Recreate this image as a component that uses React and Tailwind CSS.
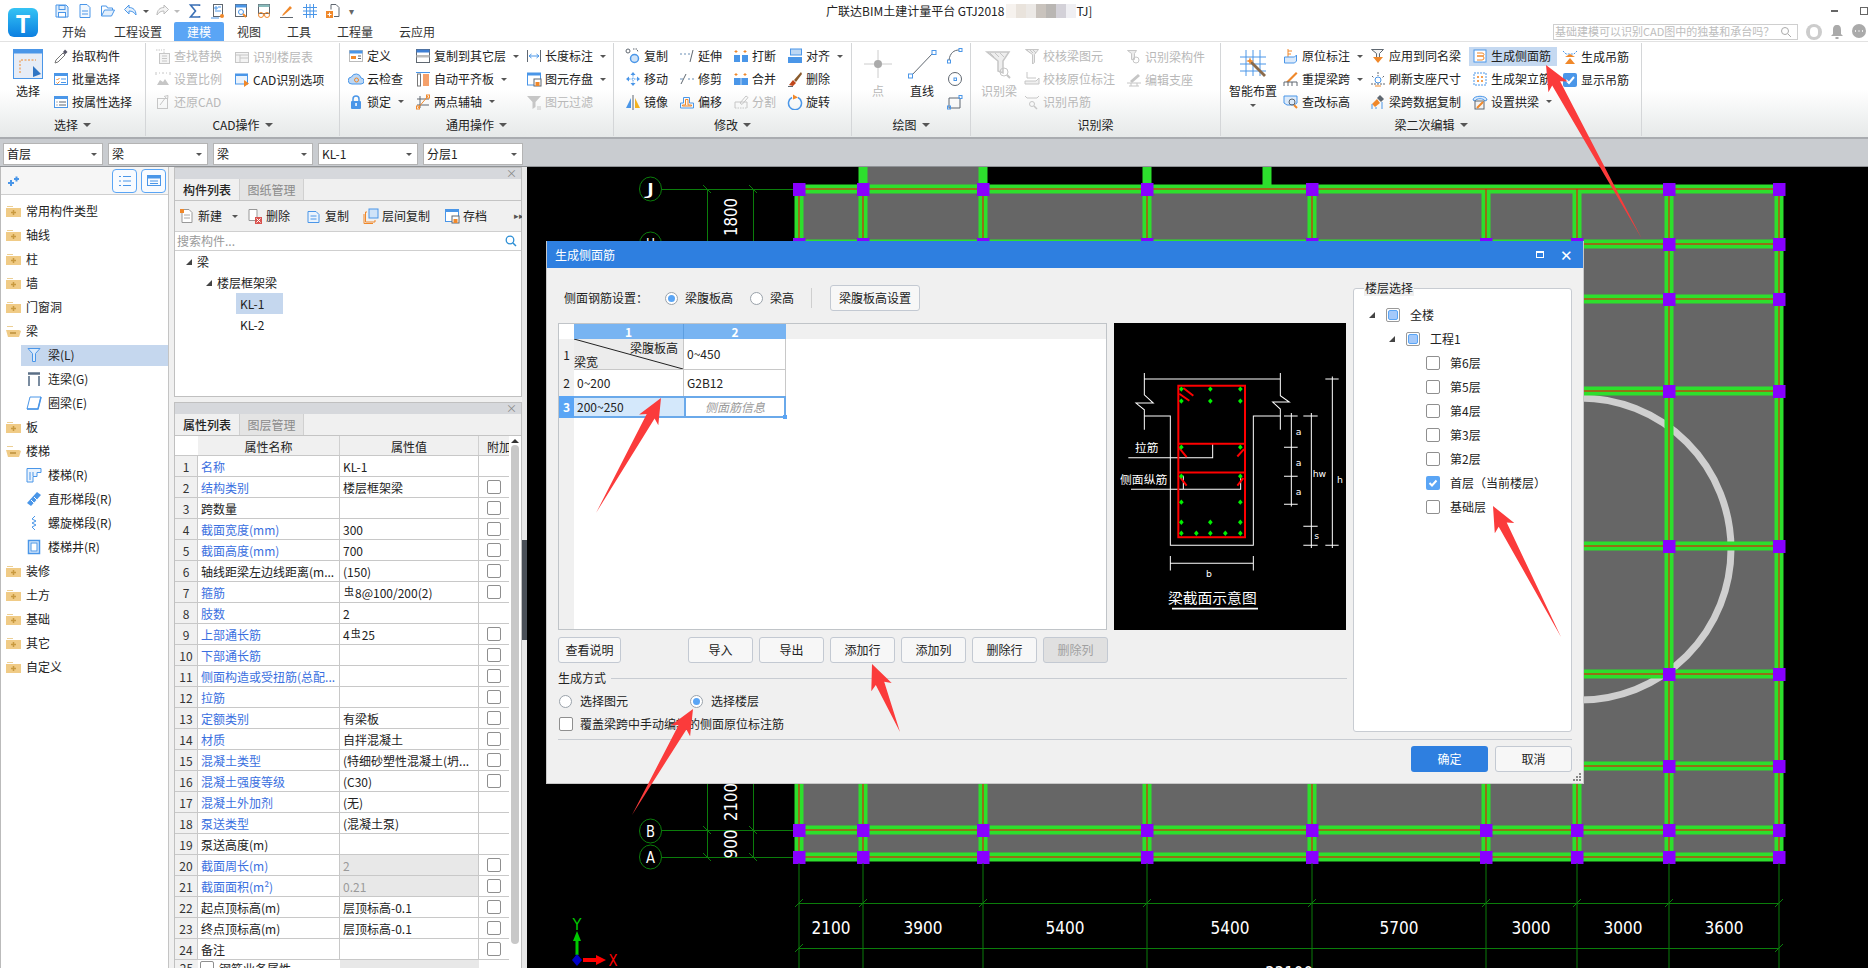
import React from 'react';

const B = '#4a96e8';
const O = '#f0882a';
const D = '#c6c6c6';
const DK = '#5f6770';

const Svg = ({ w = 16, h = 16, children }) => (
  <svg width={w} height={h} viewBox={`0 0 ${w} ${h}`} fill="none" className="shrink-0">{children}</svg>
);

const Icons = {
  save: <Svg><path d="M2 2h10l2 2v10H2z" stroke={B} fill="#e4f0fc" /><rect x="5" y="2.500" width="6" height="4" stroke={B} /><rect x="4.500" y="9.500" width="7" height="4.500" stroke={B} fill="#fff" /></Svg>,
  newdoc: <Svg><path d="M3 1.500h7l3 3v10H3z" stroke={B} fill="#f2f8fe" /><path d="M5 8h6M5 11h6" stroke={B} /></Svg>,
  open: <Svg><path d="M1.500 13V3h5l1 2h5v2" stroke={B} /><path d="M1.500 13l3-6h10l-3 6z" stroke={B} fill="#e4f0fc" /></Svg>,
  undo: <Svg><path d="M6 2L1.500 6.500 6 11V8c3 0 5 1 7 4 0-5-3-7.500-7-7.500z" stroke={B} fill="#e4f0fc" /></Svg>,
  redo: <Svg><path d="M10 2l4.500 4.500L10 11V8c-3 0-5 1-7 4 0-5 3-7.500 7-7.500z" stroke="#bbb" fill="#f4f4f4" /></Svg>,
  sigma: <Svg><path d="M12.500 3V2h-9l5 6-5 6h9v-1" stroke="#3a6fb5" strokeWidth="1.600" /></Svg>,
  calc: <Svg><rect x="3.500" y="1.500" width="9" height="12" stroke={DK} fill="#fff" /><path d="M5 4h2v2H5zM8 4h3M5 8h6" stroke={B} /><path d="M1 15h8" stroke={B} /><circle cx="12" cy="13" r="2" fill={O} /></Svg>,
  docfind: <Svg><rect x="2.500" y="1.500" width="11" height="12" stroke={DK} fill="#fff" /><path d="M2.500 1.500h11v3h-11z" fill={B} /><circle cx="8" cy="9" r="2.500" stroke={B} /><path d="M10 11l3 3" stroke={O} strokeWidth="2" /></Svg>,
  glasses: <Svg><rect x="2.500" y="1.500" width="11" height="9" stroke={DK} fill="#fff" /><path d="M2.500 1.500h11v2.500h-11z" fill="#8bb" /><circle cx="5" cy="12" r="2.500" stroke={O} /><circle cx="11" cy="12" r="2.500" stroke={O} /><path d="M7.500 12h1" stroke={O} /></Svg>,
  pen: <Svg><path d="M4 11l7-8 2 2-8 7-2 1z" fill={O} /><path d="M1 14.500h13" stroke={DK} /></Svg>,
  grid: <Svg><path d="M1 4.500h14M1 8h14M1 11.500h14M4.500 1v14M8 1v14M11.500 1v14" stroke={B} /></Svg>,
  plusdoc: <Svg><path d="M6 1.500h5l3 3v9H9" stroke={DK} /><path d="M6 1.500v5" stroke={DK} /><rect x="1" y="8" width="7" height="7" fill={O} /><path d="M4.500 9.500v4M2.500 11.500h4" stroke="#fff" /></Svg>,

  pick: <Svg><path d="M2 15l1-3 7-7 2 2-7 7z" fill="#fff" stroke="#777" /><path d="M10 4l2-2.500L14.500 4 12 6.500z" fill="#556" /></Svg>,
  batch: <Svg><rect x="1.500" y="2.500" width="13" height="11" stroke={B} fill="#fff" /><rect x="1.500" y="2.500" width="13" height="2.500" fill={B} /><path d="M3.500 8l1 1 2-2M3.500 11.500l1 1 2-2" stroke={O} /><path d="M8 8h5M8 11.500h5" stroke={B} /></Svg>,
  attr: <Svg><rect x="1.500" y="2.500" width="13" height="11" stroke={B} fill="#fff" /><rect x="1.500" y="2.500" width="13" height="2.500" fill={B} /><path d="M3.500 8h1M3.500 11h1M6 8h7M6 11h7" stroke={DK} /></Svg>,
  find: <Svg><path d="M1 2h6M9 1v4" stroke={D} strokeDasharray="1.500 1" /><rect x="4.500" y="5.500" width="10" height="10" stroke={D} fill="#f4f4f4" /><path d="M7 8h5M7 10.500h5M7 13h5" stroke={D} /></Svg>,
  table: <Svg><rect x="1.500" y="3.500" width="13" height="10" stroke={D} fill="#f4f4f4" /><path d="M1.500 6h13M6 6v7.500M6 9h8" stroke={D} /></Svg>,
  scale: <Svg><path d="M1 1v3M15 1v3M4 2h1M7 2h2M11 2h1" stroke={D} /><path d="M2 14l3-5 3 2 2-3 4 6z" fill={D} /></Svg>,
  cadopt: <Svg><rect x="1.500" y="2" width="12" height="10" stroke={B} fill="#eaf3fd" /><rect x="1.500" y="2" width="12" height="2" fill={B} /><path d="M10 8l5 3.500-5 3.500z" fill={O} /></Svg>,
  restore: <Svg><rect x="2.500" y="4.500" width="10" height="10" stroke={D} /><path d="M5 11l6-8M9 2.500l4-1-.500 4" stroke={D} /></Svg>,
  define: <Svg><rect x="1.500" y="2.500" width="13" height="11" stroke="#bbb" fill="#fff" /><rect x="1.500" y="2.500" width="13" height="3" fill={B} /><rect x="3" y="8" width="5" height="3" fill={O} /><path d="M10 8h3M10 10.500h3" stroke={DK} /></Svg>,
  cloud: <Svg><path d="M4 13a3.500 3.500 0 0 1-.500-7 5 5 0 0 1 9.500 1 3 3 0 0 1 0 6z" fill="#bcd7f4" stroke={B} /><circle cx="8.500" cy="9" r="2" stroke={O} /></Svg>,
  lock: <Svg><path d="M5 7V5a3 3 0 0 1 6 0v2" stroke={B} strokeWidth="1.500" /><rect x="3" y="7" width="10" height="8" rx="1" fill={B} /><rect x="7.300" y="9" width="1.500" height="3" fill="#fff" /></Svg>,
  copyto: <Svg><rect x="1.500" y="1.500" width="13" height="13" stroke={DK} fill="#fff" /><rect x="1.500" y="1.500" width="13" height="3" fill="#3f7fd4" /><rect x="1.500" y="7" width="13" height="2.500" fill="#bbb" /></Svg>,
  align: <Svg><path d="M1 1.500h14" stroke={B} /><rect x="2.500" y="3" width="3" height="12" stroke="#777" fill="#fff" /><rect x="8" y="3" width="6" height="12" fill="#f5a06a" /></Svg>,
  twoaxis: <Svg><path d="M2 5h12M2 11h12M5 2v12" stroke={DK} /><path d="M3 14L13 2" stroke={O} /><rect x="11.500" y="1" width="3" height="3" stroke={O} /><rect x="1.500" y="12" width="3" height="3" stroke={O} /></Svg>,
  dim: <Svg><path d="M1.500 2v12M14.500 2v12" stroke={DK} /><path d="M3 8h10M3 8l2.500-2M3 8l2.500 2M13 8l-2.500-2M13 8l-2.500 2" stroke={B} /></Svg>,
  saveel: <Svg><rect x="1.500" y="2" width="13" height="12" stroke={B} fill="#fff" /><rect x="1.500" y="2" width="13" height="2.500" fill={B} /><rect x="8" y="8" width="7" height="7" fill="#fff" stroke={DK} /><rect x="9.500" y="11" width="4" height="4" fill={O} /></Svg>,
  filter: <Svg><path d="M1 2h14L9.500 8v5L6.500 15V8z" fill={D} /><path d="M11 13h4M11 15h4" stroke={D} /></Svg>,
  copy: <Svg><circle cx="3" cy="3" r="2" stroke={DK} /><path d="M8 1h4l1 3" stroke={DK} strokeDasharray="1.500 1" /><circle cx="9.500" cy="10.500" r="4" fill="#cfe3f8" stroke={B} strokeWidth="1.500" /></Svg>,
  extend: <Svg><path d="M1 6h2M5 6h2M9 6h2" stroke="#6a8fb5" /><path d="M11 14l3-12" stroke={DK} /></Svg>,
  cut: <Svg><path d="M2 13L7 3" stroke={DK} /><path d="M1 8h3M9 8h2M13 8h2" stroke="#6a8fb5" /></Svg>,
  breakk: <Svg><path d="M3 2v3M1.500 3.500h3M12 2v3M10.500 3.500h3" stroke={O} /><rect x="1" y="7" width="6" height="7" fill={B} /><rect x="9" y="7" width="6" height="7" fill={B} /></Svg>,
  merge: <Svg><path d="M3 2v3M1.500 3.500h3M12 2v3M10.500 3.500h3" stroke={O} /><rect x="1" y="7" width="14" height="7" fill={B} /><path d="M8 7v7" stroke="#bcd7f4" /></Svg>,
  alignr: <Svg><rect x="3.500" y="1" width="11" height="6" fill="#bcd7f4" stroke={B} /><rect x="1" y="9" width="14" height="6" fill={B} /></Svg>,
  move: <Svg><path d="M8 1l2.500 3h-5zM8 15l2.500-3h-5zM1 8l3-2.500v5zM15 8l-3-2.500v5z" fill={B} /><path d="M4 8h8M8 4v8" stroke={B} strokeDasharray="1.500 1" /></Svg>,
  erase: <Svg><path d="M14 1L7 9l2 2 6-8z" fill="#8a5a2b" /><path d="M6 9l3 3-3 3-4-1z" fill="#c0461b" /><path d="M1 15.500h5" stroke={DK} /></Svg>,
  mirror: <Svg><path d="M1 14l5-10v10z" fill={B} /><path d="M8 1v15" stroke={DK} /><path d="M10 4l5 10h-5z" fill="#f5b21e" /></Svg>,
  offset: <Svg><path d="M1.500 14V9h3V3.500h6V9h4v5z" stroke={B} /><path d="M3.500 12V11h3V5.500h2.500V11h3.500v1z" stroke={O} /></Svg>,
  split: <Svg><path d="M2 14V8h12v6" stroke={D} /><path d="M2 14h12" stroke={D} strokeDasharray="1.500 1" /><path d="M7 9l6-7 2 1.500-6 7z" stroke={D} /></Svg>,
  rotate: <Svg><path d="M5 3.500A6.500 6.500 0 1 0 11 3.500" stroke={B} strokeWidth="1.500" /><path d="M6 0.500l5 3-5 2z" fill={O} /></Svg>,
  arc: <Svg><rect x="0.500" y="12" width="3" height="3" stroke={B} /><path d="M2 12C3 5 7 2 12 2" stroke={DK} /><rect x="12" y="0.500" width="3" height="3" stroke={B} /></Svg>,
  circle: <Svg><circle cx="8" cy="8" r="6.500" stroke={DK} /><rect x="7" y="7" width="2.500" height="2.500" stroke={B} /></Svg>,
  rectt: <Svg><path d="M2 4h11v10H2" stroke={DK} /><path d="M2 4v10" stroke={DK} /><rect x="12" y="1.500" width="3" height="3" stroke={B} /><rect x="0.500" y="12" width="3" height="3" stroke={B} /></Svg>,
  chkbeam: <Svg><path d="M1.500 1.500h13l-4 5v8l-2 1.500v-9.500z" stroke={D} fill="#ececec" /><path d="M3 2l3 3M6 2l3 3M9 2l3 3" stroke={D} /></Svg>,
  chkorig: <Svg><path d="M3 1v6h9" stroke={D} /><path d="M1 10h11l3-3v6H1z" stroke={D} fill="#f0f0f0" /></Svg>,
  hang: <Svg><path d="M1 2l2 2h10l2-2" stroke={D} /><circle cx="8" cy="10" r="2.500" stroke={D} /><path d="M10 12l3 3" stroke={D} strokeWidth="1.500" /></Svg>,
  beampart: <Svg><path d="M1.500 1.500h9l-2 3v6h-3v-6z" stroke={D} fill="#ececec" /><circle cx="10" cy="11" r="3" stroke={D} /></Svg>,
  support: <Svg><path d="M1 11h14M3 14h10M5 11v3M11 11v3" stroke={D} /><path d="M4 9l8-7 2 2-8 7z" fill={D} /></Svg>,
  orig: <Svg><path d="M5 1v8M5 3h4M5 6h3" stroke={O} /><path d="M1.500 9h10l2-2v6l-2 2h-10z" fill="#dbeafb" stroke={B} /></Svg>,
  respan: <Svg><path d="M3 11L13 1l1.500 1.500L6 11z" fill={O} /><path d="M1 15V11h13v4M5 11v4M9 11v4" stroke={DK} /></Svg>,
  elev: <Svg><path d="M1 2h13v7l-3 2H4l-3-2z" fill="#dbeafb" stroke={B} /><circle cx="9" cy="8" r="3" stroke={DK} /><path d="M11 11l3 3" stroke={O} strokeWidth="2" /></Svg>,
  apply: <Svg><path d="M1.500 1.500h12l-4 4v6h-3v-6z" stroke={DK} fill="#f4f4f4" /><path d="M3 9l5 6 5-6z" fill={O} /></Svg>,
  refresh: <Svg><circle cx="8" cy="9" r="3" stroke={B} /><path d="M8 1v4M2 5l2 2M14 5l-2 2M1 13h14" stroke={DK} strokeDasharray="2 1" /><path d="M5 15h6" stroke={O} /></Svg>,
  brush: <Svg><path d="M10 1l4 4-3 3-4-4z" fill={DK} /><path d="M7 5l3 4-5 4-3-3z" fill={O} /><path d="M2 10v5M6 13v2M12 8v7" stroke={B} /></Svg>,
  sidebar: <Svg><rect x="2" y="2" width="12" height="12" stroke={B} fill="#fff" /><path d="M5 5h5q2 0 2 1.500T10 8H5M5 8h5q2 0 2 2t-2 2H5" stroke={O} /></Svg>,
  frame: <Svg><rect x="2" y="2" width="12" height="12" stroke={B} strokeDasharray="2 1" /><path d="M5.500 5.500h1v1h-1zM9.500 5.500h1v1h-1zM5.500 9.500h1v1h-1zM9.500 9.500h1v1h-1z" fill={O} stroke={O} /></Svg>,
  arch: <Svg><path d="M1 6c0-5 14-5 14 0l-2 1c-1-3-9-3-10 0z" fill="#dbeafb" stroke={B} /><rect x="3" y="7" width="9" height="8" fill="#f4f4f4" stroke={DK} /><path d="M5 14l6-6" stroke={O} strokeWidth="2" /></Svg>,
  genhang: <Svg><path d="M1 2l3 3h8l3-3" stroke={B} strokeDasharray="2 1" /><path d="M3 8l5-3 5 3z" fill={O} /><path d="M3 15h10l-5-6z" fill={O} /></Svg>,
  showhang: <Svg><rect x="1" y="1" width="14" height="14" rx="2" fill={B} /><path d="M4 8l3 3 5-6" stroke="#fff" strokeWidth="2" /></Svg>,
};

const caret = <span className="ml-[7px] inline-block w-0 h-0 border-x-[3px] border-x-transparent border-t-[3px] border-t-[#555]" />;

const Item = ({ icon, label, off, drop, active }) => (
  <div className={`flex items-center h-[23px] whitespace-nowrap ${off ? 'text-[#b8b8b8]' : 'text-[#222]'}`}>
    <div className={`flex items-center h-[19px] ${active ? 'bg-[#c5d9f1] -ml-[3px] pl-[3px] w-[88px]' : ''}`}>
      <span className="w-[19px] shrink-0">{Icons[icon]}</span>
      <span>{label}</span>
      {drop && caret}
    </div>
  </div>
);

const Col = ({ className, items }) => (
  <div className={`flex flex-col shrink-0 ${className}`}>
    {items.map((it) => <Item key={it.label} {...it} />)}
  </div>
);

const Big = ({ className, icon, label, off, drop }) => (
  <div className={`flex flex-col items-center shrink-0 pt-[4px] ${className} ${off ? 'text-[#b8b8b8]' : 'text-[#222]'}`}>
    <div className="h-[30px] flex items-center">{icon}</div>
    <span className="mt-[4px] leading-4 whitespace-nowrap">{label}</span>
    {drop && <span className="mt-[5px] w-0 h-0 border-x-[3px] border-x-transparent border-t-[3px] border-t-[#555]" />}
  </div>
);

const Group = ({ className, label, drop, children }) => (
  <div className={`flex flex-col shrink-0 border-r border-[#d4d6d8] my-[1px] ${className}`}>
    <div className="flex h-[70px] pt-[2px]">{children}</div>
    <div className="flex-1 flex items-center justify-center text-[#222]">
      <span>{label}</span>
      {drop && <span className="ml-[5px] w-0 h-0 border-x-[4px] border-x-transparent border-t-[4px] border-t-[#555]" />}
    </div>
  </div>
);

const Ribbon = () => (
  <div className="flex h-[98px] border-t border-[#e2e2e2] border-b-2 border-b-[#a9acb0] bg-gradient-to-b from-white via-white to-[#e6e9e9]">
    <Group className="w-[146px]" label="选择" drop>
      <Big className="w-[48px] ml-[4px]" label="选择" icon={
        <Svg w={30} h={30}>
          <rect x="0.500" y="0.500" width="29" height="29" fill="#e6ecf6" stroke={B} />
          <rect x="0.500" y="0.500" width="29" height="4" fill={B} />
          <path d="M7 24V11h16" stroke={O} strokeDasharray="2 1.500" />
          <path d="M20 17l8 8-8 3z" fill="#2f75c4" />
        </Svg>
      } />
      <Col className="ml-[1px]" items={[{ icon: 'pick', label: '抬取构件' }, { icon: 'batch', label: '批量选择' }, { icon: 'attr', label: '按属性选择' }]} />
    </Group>
    <Group className="w-[194px]" label="CAD操作" drop>
      <Col className="ml-[9px] w-[79px]" items={[{ icon: 'find', label: '查找替换', off: true }, { icon: 'scale', label: '设置比例', off: true }, { icon: 'restore', label: '还原CAD', off: true }]} />
      <Col items={[{ icon: 'table', label: '识别楼层表', off: true }, { icon: 'cadopt', label: 'CAD识别选项' }]} />
    </Group>
    <Group className="w-[274px]" label="通用操作" drop>
      <Col className="ml-[8px] w-[67px]" items={[{ icon: 'define', label: '定义' }, { icon: 'cloud', label: '云检查' }, { icon: 'lock', label: '锁定', drop: true }]} />
      <Col className="w-[111px]" items={[{ icon: 'copyto', label: '复制到其它层', drop: true }, { icon: 'align', label: '自动平齐板', drop: true }, { icon: 'twoaxis', label: '两点辅轴', drop: true }]} />
      <Col items={[{ icon: 'dim', label: '长度标注', drop: true }, { icon: 'saveel', label: '图元存盘', drop: true }, { icon: 'filter', label: '图元过滤', off: true }]} />
    </Group>
    <Group className="w-[238px]" label="修改" drop>
      <Col className="ml-[11px] w-[54px]" items={[{ icon: 'copy', label: '复制' }, { icon: 'move', label: '移动' }, { icon: 'mirror', label: '镜像' }]} />
      <Col className="w-[54px]" items={[{ icon: 'extend', label: '延伸' }, { icon: 'cut', label: '修剪' }, { icon: 'offset', label: '偏移' }]} />
      <Col className="w-[54px]" items={[{ icon: 'breakk', label: '打断' }, { icon: 'merge', label: '合并' }, { icon: 'split', label: '分割', off: true }]} />
      <Col items={[{ icon: 'alignr', label: '对齐', drop: true }, { icon: 'erase', label: '删除' }, { icon: 'rotate', label: '旋转' }]} />
    </Group>
    <Group className="w-[119px]" label="绘图" drop>
      <Big className="w-[44px] ml-[4px]" label="点" off icon={
        <Svg w={30} h={30}>
          <path d="M15 1v28M1 15h28" stroke="#ccc" />
          <circle cx="15" cy="15" r="4" fill="#aaa" />
        </Svg>
      } />
      <Big className="w-[44px]" label="直线" icon={
        <Svg w={30} h={30}>
          <path d="M4 27L26 4" stroke={DK} />
          <rect x="1.500" y="25" width="4" height="4" stroke={B} fill="#fff" />
          <rect x="25" y="1.500" width="4" height="4" stroke={B} fill="#fff" />
        </Svg>
      } />
      <div className="flex flex-col ml-[3px]">
        <div className="h-[23px] flex items-center">{Icons.arc}</div>
        <div className="h-[23px] flex items-center">{Icons.circle}</div>
        <div className="h-[23px] flex items-center">{Icons.rectt}</div>
      </div>
    </Group>
    <Group className="w-[250px]" label="识别梁">
      <Big className="w-[50px] ml-[3px]" label="识别梁" off icon={
        <Svg w={30} h={30}>
          <path d="M3 3h22l-6 9v12l-5-2V12z" fill="#eee" stroke={D} strokeWidth="1.500" />
          <path d="M6 4l4 4M11 4l4 4M16 4l4 4" stroke={D} />
          <circle cx="20" cy="23" r="4" stroke={D} />
          <path d="M23 26l3 3" stroke={D} strokeWidth="2" />
        </Svg>
      } />
      <Col className="w-[102px]" items={[{ icon: 'chkbeam', label: '校核梁图元', off: true }, { icon: 'chkorig', label: '校核原位标注', off: true }, { icon: 'hang', label: '识别吊筋', off: true }]} />
      <Col items={[{ icon: 'beampart', label: '识别梁构件', off: true }, { icon: 'support', label: '编辑支座', off: true }]} />
    </Group>
    <Group className="w-[421px]" label="梁二次编辑" drop>
      <Big className="w-[56px] ml-[4px]" label="智能布置" drop icon={
        <Svg w={30} h={30}>
          <path d="M2 8h26M2 15h26M2 22h26M8 1v26M15 1v26M22 1v26" stroke={B} />
          <path d="M14 12l14 14-2 2L12 14z" fill="#8a6a4a" />
          <path d="M12 8l1 3 3 1-3 1-1 3-1-3-3-1 3-1z" fill={O} />
        </Svg>
      } />
      <Col className="ml-[2px] w-[87px]" items={[{ icon: 'orig', label: '原位标注', drop: true }, { icon: 'respan', label: '重提梁跨', drop: true }, { icon: 'elev', label: '查改标高' }]} />
      <Col className="w-[102px]" items={[{ icon: 'apply', label: '应用到同名梁' }, { icon: 'refresh', label: '刷新支座尺寸' }, { icon: 'brush', label: '梁跨数据复制' }]} />
      <Col className="w-[90px]" items={[{ icon: 'sidebar', label: '生成侧面筋', active: true }, { icon: 'frame', label: '生成架立筋' }, { icon: 'arch', label: '设置拱梁', drop: true }]} />
      <Col items={[{ icon: 'genhang', label: '生成吊筋' }, { icon: 'showhang', label: '显示吊筋' }]} />
    </Group>
  </div>
);

const Header = () => (
  <div className="flex h-[41px]">
    <div className="w-[46px] h-[41px] shrink-0 pl-[8px] pt-[8px]">
      <div className="w-[30px] h-[29px] rounded-[6px] bg-gradient-to-b from-[#35c3f4] to-[#0d7fe0] flex items-center justify-center text-white font-bold text-[24px] leading-none">T</div>
    </div>
    <div className="flex-1 flex flex-col">
      <div className="flex items-center h-[22px] pl-[4px]">
        {['save', 'newdoc', 'open', 'undo'].map((k) => <span key={k} className="w-[23px] flex justify-center">{Icons[k]}</span>)}
        <span className="w-[8px] flex justify-center"><span className="w-0 h-0 border-x-[3px] border-x-transparent border-t-[3px] border-t-[#555]" /></span>
        <span className="w-[23px] flex justify-center">{Icons.redo}</span>
        <span className="w-[8px] flex justify-center mr-[2px]"><span className="w-0 h-0 border-x-[3px] border-x-transparent border-t-[3px] border-t-[#bbb]" /></span>
        {['sigma', 'calc', 'docfind', 'glasses', 'pen', 'grid', 'plusdoc'].map((k) => <span key={k} className="w-[23px] flex justify-center">{Icons[k]}</span>)}
        <span className="w-[14px] flex justify-center text-[#666] text-[10px]">▾</span>
        <div className="ml-[468px] flex items-center text-[#222] whitespace-nowrap">
          <span>广联达BIM土建计量平台 GTJ2018</span>
          <div className="flex ml-[2px] h-[14px]">
            <span className="w-[10px] bg-[#f6f2ee]" />
            <span className="w-[10px] bg-[#e9e3dc]" />
            <span className="w-[10px] bg-[#ece9e6]" />
            <span className="w-[10px] bg-[#c9c3bd]" />
            <span className="w-[10px] bg-[#b9b6b3]" />
            <span className="w-[10px] bg-[#d3d1d8]" />
            <span className="w-[10px] bg-[#efeff3]" />
          </div>
          <span>TJ]</span>
        </div>
        <div className="ml-auto flex items-center">
          <span className="w-[7px] h-[2px] bg-[#666]" />
          <span className="ml-[22px] w-[8px] h-[8px] border border-[#666]" />
        </div>
      </div>
      <div className="flex h-[19px]">
        {[['开始', 'w-[56px]'], ['工程设置', 'w-[72px]'], ['建模', 'w-[50px]'], ['视图', 'w-[50px]'], ['工具', 'w-[50px]'], ['工程量', 'w-[62px]'], ['云应用', 'w-[62px]']].map(([t, w]) => (
          <div key={t} className={`${w} flex items-center justify-center rounded-t-[2px] ${t === '建模' ? 'bg-[#5aa5f5] text-white' : 'text-[#333]'}`}>{t}</div>
        ))}
        <div className="ml-auto flex items-center pr-[1px]">
          <div className="w-[245px] h-[16px] border border-[#cfcfcf] flex items-center pl-[1px] pr-[5px] text-[11px] text-[#bdbdbd] overflow-hidden whitespace-nowrap">
            <span className="flex-1">基础建模可以识别CAD图中的独基和承台吗？</span>
            <Svg w={12} h={12}><circle cx="5" cy="5" r="3.500" stroke="#aaa" /><path d="M8 8l3 3" stroke="#aaa" /></Svg>
          </div>
          <div className="ml-[8px] w-[16px] h-[16px] rounded-full bg-[#ccc] flex items-center justify-center"><span className="w-[8px] h-[10px] rounded-full bg-white" /></div>
          <div className="ml-[7px]">
            <Svg><path d="M8 1c3 0 4 2 4 5v4l2 2H2l2-2V6c0-3 1-5 4-5z" fill="#aaa" /><rect x="6.500" y="13" width="3" height="2" fill="#aaa" /></Svg>
          </div>
          <div className="ml-[6px]">
            <Svg><circle cx="8" cy="7" r="7" fill="#aaa" /><path d="M4 7h1M7.500 7h1M11 7h1" stroke="#fff" strokeWidth="1.500" /></Svg>
          </div>
        </div>
      </div>
    </div>
  </div>
);

const Combo = ({ label }) => (
  <div className="w-[100px] h-[22px] bg-white border border-[#b4b4b4] flex items-center justify-between px-[3px] text-[#222]">
    <span>{label}</span>
    <span className="mr-[2px] w-0 h-0 border-x-[3px] border-x-transparent border-t-[3px] border-t-[#555]" />
  </div>
);

const Folder = ({ open }) => (
  <Svg w={15} h={13}>
    <path d="M1 1h6v1H1z" fill="#eccf94" />
    <path d={open ? 'M0 5h13l2 1-2 6H2z' : 'M0 3h15v9H0z'} fill="#f0cb86" />
    {open
      ? <path d="M4 8h6" stroke="#bd8f3a" strokeWidth="1.500" />
      : <path d="M5 7.500h5M7.500 5v5" stroke="#c8993f" strokeWidth="1.500" />}
  </Svg>
);

const TreeIcons = {
  beam: <Svg><path d="M2 1.500h12l-4.500 5v8h-3v-8z" stroke={B} fill="#dbeafb" /></Svg>,
  lintel: <Svg><path d="M2 2.500h12" stroke="#5b6f86" strokeWidth="2.500" /><path d="M3 5v10M13 5v10" stroke="#7a8ca0" strokeWidth="2" /></Svg>,
  ring: <Svg><path d="M4 2h11l-3 12H1z" stroke={B} fill="#fff" /><path d="M1 14h11l3-12" stroke={B} strokeWidth="1.500" /></Svg>,
  stair: <Svg><path d="M1 1.500h14v4h-4v4H7v5.500H1z" stroke={B} fill="#eaf3fd" /><path d="M4 5v8M7 5v4" stroke={B} /></Svg>,
  straight: <Svg><path d="M1 12L11 1l4 3L5 15z" fill={B} /><path d="M5 9l3 3M8 6l3 3" stroke="#fff" /></Svg>,
  spiral: <Svg><path d="M9 1L6 4l4 2-4 2 4 2-4 2 3 3" stroke={B} /></Svg>,
  well: <Svg><rect x="2.500" y="1.500" width="11" height="13" stroke={B} fill="#dbeafb" strokeWidth="1.500" /><rect x="5" y="4" width="6" height="8" stroke={B} fill="#fff" /></Svg>,
};

const leftTree = [
  ['常用构件类型'], ['轴线'], ['柱'], ['墙'], ['门窗洞'], ['梁', 'open'],
  ['梁(L)', 'beam', true], ['连梁(G)', 'lintel'], ['圈梁(E)', 'ring'],
  ['板'], ['楼梯', 'open'],
  ['楼梯(R)', 'stair'], ['直形梯段(R)', 'straight'], ['螺旋梯段(R)', 'spiral'], ['楼梯井(R)', 'well'],
  ['装修'], ['土方'], ['基础'], ['其它'], ['自定义'],
];

const LeftPanel = () => (
  <div className="w-[169px] shrink-0 flex flex-col bg-white border-l border-[#bbb] border-r border-r-[#c4c4c4]">
    <div className="h-[28px] shrink-0 flex items-center bg-[#f6f6f6] border-b border-[#cfcfcf] pl-[7px]">
      <Svg w={12} h={12}><path d="M0 8h6M3 5v6M6 4h5M8.500 1.500v5" stroke={B} strokeWidth="2" /></Svg>
      <div className="ml-[92px] w-[25px] h-[24px] rounded-[4px] border border-[#5aa5f5] bg-[#f8fbff] flex items-center justify-center">
        <Svg w={14} h={14}><path d="M1 2.500h2M1 7h2M1 11.500h2M5 2.500h8M5 7h8M5 11.500h8" stroke={B} /></Svg>
      </div>
      <div className="ml-[4px] w-[25px] h-[24px] rounded-[4px] border border-[#5aa5f5] bg-[#f8fbff] flex items-center justify-center">
        <Svg w={14} h={14}><rect x="0.500" y="1.500" width="13" height="10" stroke={B} /><rect x="0.500" y="1.500" width="13" height="3" fill={B} /><path d="M3 7h8M3 9.500h8" stroke={B} /></Svg>
      </div>
    </div>
    <div className="flex flex-col pt-[4px] text-[#222]">
      {leftTree.map(([label, kind, sel]) => {
        const child = kind && kind !== 'open';
        if (child) {
          return (
            <div key={label} className="h-[24px] flex items-center pl-[20px]">
              <div className={`flex-1 h-[21px] flex items-center pl-[5px] ${sel ? 'bg-[#c5d7ee]' : ''}`}>
                {TreeIcons[kind]}
                <span className="ml-[6px]">{label}</span>
              </div>
            </div>
          );
        }
        return (
          <div key={label} className="h-[24px] flex items-center pl-[5px]">
            <Folder open={kind === 'open'} />
            <span className="ml-[5px]">{label}</span>
          </div>
        );
      })}
    </div>
  </div>
);

const PanelHead = ({ a, b }) => (
  <>
    <div className="h-[11px] shrink-0 bg-[#d6d8dc] flex items-center justify-end pr-[4px] text-[#888] text-[11px] leading-none">×</div>
    <div className="h-[22px] shrink-0 flex bg-[#f0f0f0] border-b border-[#c4c4c4]">
      <div className="w-[64px] flex items-center justify-center font-medium text-[#222]">{a}</div>
      <div className="w-[65px] flex items-center justify-center bg-[#e4e4e4] text-[#8a8a8a] border-x border-[#d0d0d0]">{b}</div>
    </div>
  </>
);

const ToolBtn = ({ className, icon, label, drop }) => (
  <div className={`flex items-center shrink-0 ${className}`}>
    {icon}
    <span className="ml-[3px]">{label}</span>
    {drop && <span className="ml-[10px] w-0 h-0 border-x-[3px] border-x-transparent border-t-[3px] border-t-[#555]" />}
  </div>
);

const Tri = () => (
  <Svg w={6} h={6}><path d="M6 0v6H0z" fill="#444" /></Svg>
);

const CompPanel = () => (
  <div className="h-[230px] shrink-0 flex flex-col border border-[#c0c0c0] bg-white text-[#222]">
    <PanelHead a="构件列表" b="图纸管理" />
    <div className="h-[30px] shrink-0 flex items-center pl-[4px] bg-[#f0f0f0] whitespace-nowrap">
      <ToolBtn className="w-[68px]" label="新建" drop icon={<Svg><path d="M3 1.500h7l3 3v10H3z" stroke="#999" fill="#fff" /><path d="M5 7h6M5 10h6" stroke="#aaa" /><path d="M1 1h4v4H1z" fill={O} /></Svg>} />
      <ToolBtn className="w-[59px]" label="删除" icon={<Svg><path d="M2 1.500h8v11H2z" stroke="#999" fill="#fff" /><rect x="8" y="9" width="7" height="7" fill="#d9534f" /><path d="M9.500 10.500l4 4M13.500 10.500l-4 4" stroke="#fff" /></Svg>} />
      <ToolBtn className="w-[57px]" label="复制" icon={<Svg><path d="M2 3.500h8l3 3v8H2z" stroke={B} fill="#eaf3fd" /><path d="M4.500 8h6M4.500 11h6" stroke={B} /></Svg>} />
      <ToolBtn className="w-[81px]" label="层间复制" icon={<Svg><rect x="6" y="1" width="9" height="9" fill="#cfe3f8" stroke={B} /><path d="M4 4H2.500v10H12v-2M1 6v9.500h9" stroke={O} /></Svg>} />
      <ToolBtn className="w-[70px]" label="存档" icon={<Svg><rect x="1.500" y="1.500" width="13" height="12" stroke={B} fill="#fff" /><rect x="1.500" y="1.500" width="13" height="2.500" fill={B} /><rect x="8" y="8" width="7" height="7" fill="#fff" stroke={DK} /><rect x="9.500" y="11" width="4" height="4" fill={O} /></Svg>} />
      <span className="text-[#555] text-[9px]">▸▸</span>
    </div>
    <div className="h-[20px] shrink-0 flex items-center justify-between px-[2px] pr-[4px] border-y border-[#cfcfcf] text-[#9a9a9a]">
      <span>搜索构件...</span>
      <Svg w={12} h={12}><circle cx="5" cy="5" r="3.800" stroke="#2d8fd5" strokeWidth="1.300" /><path d="M8 8l3 3" stroke="#2d8fd5" strokeWidth="1.500" /></Svg>
    </div>
    <div className="flex flex-col">
      <div className="h-[21px] flex items-center pl-[11px]"><Tri /><span className="ml-[5px]">梁</span></div>
      <div className="h-[21px] flex items-center pl-[31px]"><Tri /><span className="ml-[5px]">楼层框架梁</span></div>
      <div className="h-[21px] flex items-center pl-[61px]"><div className="w-[47px] h-full flex items-center pl-[4px] bg-[#c5d7ee]">KL-1</div></div>
      <div className="h-[21px] flex items-center pl-[65px]">KL-2</div>
    </div>
  </div>
);

const Steel = () => <span className="text-[10px] [vertical-align:3px] mx-[1px]">虫</span>;

const props = [
  ['名称', 'KL-1', 0, 1],
  ['结构类别', '楼层框架梁', 1, 1],
  ['跨数量', '', 1, 0],
  ['截面宽度(mm)', '300', 1, 1],
  ['截面高度(mm)', '700', 1, 1],
  ['轴线距梁左边线距离(m...', '(150)', 1, 0],
  ['箍筋', <span><Steel />8@100/200(2)</span>, 1, 1],
  ['肢数', '2', 0, 1],
  ['上部通长筋', <span>4<Steel />25</span>, 1, 1],
  ['下部通长筋', '', 1, 1],
  ['侧面构造或受扭筋(总配...', '', 1, 1],
  ['拉筋', '', 1, 1],
  ['定额类别', '有梁板', 1, 1],
  ['材质', '自拌混凝土', 1, 1],
  ['混凝土类型', '(特细砂塑性混凝土(坍...', 1, 1],
  ['混凝土强度等级', '(C30)', 1, 1],
  ['混凝土外加剂', '(无)', 0, 1],
  ['泵送类型', '(混凝土泵)', 0, 1],
  ['泵送高度(m)', '', 0, 0],
  ['截面周长(m)', '2', 1, 1, 1],
  ['截面面积(m²)', '0.21', 1, 1, 1],
  ['起点顶标高(m)', '层顶标高-0.1', 1, 0],
  ['终点顶标高(m)', '层顶标高-0.1', 1, 0],
  ['备注', '', 1, 0],
];

const Box = () => <span className="w-[14px] h-[14px] rounded-[2px] border border-[#8f8f8f] bg-white shrink-0" />;

const PropPanel = () => (
  <div className="flex-1 min-h-0 flex flex-col border border-[#c0c0c0] border-b-0 bg-white text-[#222] overflow-hidden mt-[5px]">
    <PanelHead a="属性列表" b="图层管理" />
    <div className="flex-1 min-h-0 flex overflow-hidden">
      <div className="w-[334px] shrink-0 flex flex-col">
        <div className="h-[20px] shrink-0 flex border-b border-[#c8c8c8]">
          <div className="w-[23px] bg-white" />
          <div className="w-[142px] flex items-center justify-center pt-[2px] bg-[#f0f0f0] border-r border-[#d0d0d0]">属性名称</div>
          <div className="w-[139px] flex items-center justify-center pt-[2px] bg-[#f0f0f0] border-r border-[#d0d0d0]">属性值</div>
          <div className="w-[30px] pl-[8px] pt-[2px] flex items-center bg-[#f0f0f0] overflow-hidden whitespace-nowrap">附加</div>
        </div>
        {props.map(([name, value, box, blue, grey], i) => (
          <div key={i} className="h-[21px] shrink-0 flex items-center border-b border-[#c8c8c8] whitespace-nowrap">
            <div className="w-[23px] h-full flex items-center justify-center pt-[1px] bg-[#f0f0f0] border-r border-[#c8c8c8] text-[#333]">{i + 1}</div>
            <div className={`w-[142px] h-full flex items-center pl-[3px] pt-[1px] border-r border-[#c8c8c8] overflow-hidden ${blue ? 'text-[#3a6fe0]' : ''}`}>{name}</div>
            <div className={`w-[139px] h-full flex items-center pl-[3px] pt-[1px] border-r border-[#c8c8c8] overflow-hidden ${grey ? 'bg-[#e8e8e8] text-[#9a9a9a]' : ''}`}>{value}</div>
            <div className="w-[30px] h-full flex items-center justify-center">{box ? <Box /> : null}</div>
          </div>
        ))}
        <div className="h-[21px] shrink-0 flex">
          <div className="w-[23px] bg-[#f0f0f0] flex justify-center text-[#333]">25</div>
          <div className="w-[142px] flex pl-[2px] pt-[1px] whitespace-nowrap"><Box /><span className="ml-[5px]">钢筋业务属性</span></div>
          <div className="w-[139px] bg-[#e8e8e8]" />
        </div>
      </div>
      <div className="flex-1 flex flex-col items-center pt-[3px]">
        <span className="w-0 h-0 border-x-[4px] border-x-transparent border-b-[4px] border-b-[#333]" />
        <div className="mt-[2px] w-[8px] h-[499px] rounded-[4px] bg-[#c8c8c8]" />
      </div>
    </div>
  </div>
);

const cols = [799, 863, 983, 1147, 1312, 1486, 1577, 1669, 1779];
const rows = [189, 244, 299, 391, 546, 674, 766, 830, 857];
const topCols = [799, 863, 983, 1147, 1312, 1669, 1779];
const axisGreen = '#0b7d0b';
const beamGreen = '#2ddf2d';

const dims = [[831, '2100'], [923, '3900'], [1065, '5400'], [1230, '5400'], [1399, '5700'], [1531, '3000'], [1623, '3000'], [1724, '3600']];

const Canvas = () => (
  <svg viewBox="527 167 1341 801" width="1341" height="801" className="block">
    <rect x="527" y="167" width="1341" height="801" fill="#000" />
    <rect x="799" y="189" width="980" height="668" fill="#666" />
    <rect x="863" y="167" width="120" height="22" fill="#666" />
    <circle cx="1580" cy="549" r="151" fill="none" stroke="#cfcfcf" strokeWidth="7" />
    {[863, 983, 1147, 1267].map((x) => <rect key={x} x={x - 4.5} y="167" width="9" height="18" fill={beamGreen} />)}
    {cols.map((x) => <rect key={x} x={x - 4.5} y="189" width="9" height="668" fill={beamGreen} />)}
    {rows.map((y) => <rect key={y} x="799" y={y - 4.5} width="980" height="9" fill={beamGreen} />)}
    {cols.map((x) => <rect key={x} x={x - 0.5} y="189" width="1" height="668" fill="#ff0000" />)}
    {rows.map((y) => <rect key={y} x="799" y={y - 0.5} width="980" height="1" fill="#ff0000" />)}
    {rows.map((y) => (y === 189 ? topCols : cols).map((x) => (
      <rect key={`${x}-${y}`} x={x - 6} y={y - 6} width="12.500" height="13" fill="#8800ff" />
    )))}

    {cols.map((x) => <path key={x} d={`M${x} 863V968`} stroke={axisGreen} />)}
    <path d="M799 903.500H1779M799 948.500H1779" stroke={axisGreen} />
    {cols.map((x) => <path key={x} d={`M${x - 4} 907L${x + 4} 899`} stroke={axisGreen} />)}
    <path d="M795 952L803 944M1775 952L1783 944" stroke={axisGreen} />
    {dims.map(([x, t], i) => (
      <text key={i} x={x} y="934" fill="#fff" fontFamily="DejaVu Sans, sans-serif" fontSize="18" textAnchor="middle" textLength="39" lengthAdjust="spacingAndGlyphs">{t}</text>
    ))}
    <text x="1289" y="979" fill="#fff" fontFamily="DejaVu Sans, sans-serif" fontSize="18" textAnchor="middle" textLength="48" lengthAdjust="spacingAndGlyphs">33100</text>

    <path d="M662 189.500H793M661 830.500H793M661 857.500H793M707.500 189V857M753.500 189V857" stroke={axisGreen} />
    <path d="M703 185L711 193M749 185L757 193M703 826L711 834M749 826L757 834M703 853L711 861M749 853L757 861" stroke={axisGreen} />
    {[['J', 189], ['H', 244], ['B', 831], ['A', 857]].map(([t, y]) => (
      <g key={t}>
        <ellipse cx="650.500" cy={y} rx="11" ry="12" fill="#000" stroke={axisGreen} />
        <text x="650.500" y={y + 6} fill="#fff" fontFamily="DejaVu Sans, sans-serif" fontSize="16" textAnchor="middle" textLength="9" lengthAdjust="spacingAndGlyphs">{t}</text>
      </g>
    ))}
    <text transform="rotate(-90 737 217)" x="737" y="217" fill="#fff" fontFamily="DejaVu Sans, sans-serif" fontSize="18" textAnchor="middle" textLength="38" lengthAdjust="spacingAndGlyphs">1800</text>
    <text transform="rotate(-90 737 802)" x="737" y="802" fill="#fff" fontFamily="DejaVu Sans, sans-serif" fontSize="18" textAnchor="middle" textLength="38" lengthAdjust="spacingAndGlyphs">2100</text>
    <text transform="rotate(-90 737 844)" x="737" y="844" fill="#fff" fontFamily="DejaVu Sans, sans-serif" fontSize="18" textAnchor="middle" textLength="29" lengthAdjust="spacingAndGlyphs">900</text>

    <path d="M577 955V940" stroke="#00c800" strokeWidth="3" />
    <path d="M577 931l4 10h-8z" fill="#00c800" />
    <path d="M583 960h14" stroke="#f00" strokeWidth="4" />
    <path d="M606 960l-10-5v10z" fill="#f00" />
    <path d="M577 954l5 6-5 6-5-6z" fill="#0000c8" />
    <text x="577" y="930" fill="#00c800" fontFamily="DejaVu Sans, sans-serif" fontSize="15" textAnchor="middle" textLength="9" lengthAdjust="spacingAndGlyphs">Y</text>
    <text x="613" y="966" fill="#f00" fontFamily="DejaVu Sans, sans-serif" fontSize="15" textAnchor="middle" textLength="9" lengthAdjust="spacingAndGlyphs">X</text>
  </svg>
);

const Radio = ({ on }) => (
  <span className="w-[13px] h-[13px] rounded-full border border-[#9aa2aa] bg-white flex items-center justify-center shrink-0">
    {on && <span className="w-[7px] h-[7px] rounded-full bg-[#5aa5f5]" />}
  </span>
);

const Btn = ({ className, off, children }) => (
  <div className={`h-[26px] flex items-center justify-center rounded-[3px] border border-[#c3c9d2] ${off ? 'bg-[#e0e0e0] text-[#a0a0a0]' : 'bg-[#f7f7f7] text-[#222]'} ${className}`}>{children}</div>
);

const rebarDots = [[244, 208], [331, 208], [421, 208], [244, 244], [331, 244], [421, 244], [244, 382], [421, 382], [244, 469], [421, 469], [244, 547], [421, 547], [244, 607], [331, 607], [421, 607], [244, 640], [289, 640], [331, 640], [376, 640], [421, 640]];

const Section = () => (
  <svg viewBox="42 10 696 920" preserveAspectRatio="none" width="232" height="307" className="block shrink-0 bg-black">
    <g stroke="#fff" strokeWidth="3" fill="none">
      <path d="M133 160V225L160 250H108L133 270V330M133 178H541M541 160V228L568 247H518L541 268V330" />
      <path d="M133 289H211V676H460V289H541" />
      <path d="M552 289H593M552 382H593M552 469H593M552 553H593M574 280V560" />
      <path d="M610 289H653M610 619H653M610 676H653M634 280V684" />
      <path d="M676 178H716M676 676H716M697 170V684" />
      <path d="M211 708V752M460 708V752M211 730H460" />
      <path d="M85 414H338V372M93 508H422V470M250 508V468" />
    </g>
    <path d="M216 866H474" stroke="#fff" strokeWidth="5" />
    <g stroke="#f00" strokeWidth="6" fill="none">
      <rect x="235" y="198" width="200" height="454" />
      <path d="M235 372H435M235 458H435" />
      <path d="M250 205L280 228M238 222L268 243M238 385L260 412M432 388L412 410M240 472L260 497M430 475L412 497" />
    </g>
    {rebarDots.map(([x, y]) => <path key={`${x}-${y}`} d={`M${x} ${y - 8}l7 8-7 8-7-8z`} fill="#00f000" />)}
    <g fill="#fff" fontFamily="Noto Sans CJK SC, sans-serif">
      <text x="105" y="398" fontSize="34" textLength="70" lengthAdjust="spacingAndGlyphs">拉筋</text>
      <text x="60" y="492" fontSize="34" textLength="142" lengthAdjust="spacingAndGlyphs">侧面纵筋</text>
      <text x="204" y="848" fontSize="42" textLength="266" lengthAdjust="spacingAndGlyphs">梁截面示意图</text>
      <text x="587" y="345" fontSize="28" fontFamily="DejaVu Sans, sans-serif">a</text>
      <text x="587" y="438" fontSize="28" fontFamily="DejaVu Sans, sans-serif">a</text>
      <text x="587" y="525" fontSize="28" fontFamily="DejaVu Sans, sans-serif">a</text>
      <text x="638" y="473" fontSize="28" fontFamily="DejaVu Sans, sans-serif">hw</text>
      <text x="643" y="658" fontSize="28" fontFamily="DejaVu Sans, sans-serif">s</text>
      <text x="711" y="488" fontSize="28" fontFamily="DejaVu Sans, sans-serif">h</text>
      <text x="318" y="770" fontSize="28" fontFamily="DejaVu Sans, sans-serif">b</text>
    </g>
  </svg>
);

const GridTable = () => (
  <div className="w-[549px] h-[307px] shrink-0 flex flex-col border border-[#c0c4c8] bg-white text-[#222]">
    <div className="h-[15px] shrink-0 flex bg-[#f0f0f0] font-bold text-white leading-none">
      <div className="w-[15px] bg-white" />
      <div className="w-[110px] flex items-center justify-center bg-[#78b4f2] border-r border-[#5d9ee0]">1</div>
      <div className="w-[102px] flex items-center justify-center bg-[#78b4f2]">2</div>
    </div>
    <div className="h-[31px] shrink-0 flex">
      <div className="w-[15px] flex items-center justify-center bg-[#f0f0f0]">1</div>
      <div className="w-[110px] relative bg-[#ececec] border-r border-b border-[#c8c8c8]">
        <svg width="109" height="30" className="absolute inset-0"><path d="M0 0L109 30" stroke="#222" /></svg>
        <span className="absolute right-[5px] top-[1px]">梁腹板高</span>
        <span className="absolute left-0 -bottom-[1px]">梁宽</span>
      </div>
      <div className="w-[102px] flex items-center pl-[3px] border-r border-b border-[#c8c8c8]">0~450</div>
    </div>
    <div className="h-[26px] shrink-0 flex">
      <div className="w-[15px] flex items-center justify-center bg-[#f0f0f0]">2</div>
      <div className="w-[110px] flex items-center pl-[3px] border-r border-[#c8c8c8]">0~200</div>
      <div className="w-[102px] flex items-center pl-[3px] border-r border-[#c8c8c8]">G2B12</div>
    </div>
    <div className="h-[22px] shrink-0 flex">
      <div className="w-[15px] flex items-center justify-center bg-[#5aa5f5] text-white font-bold">3</div>
      <div className="w-[110px] flex items-center pl-[3px] bg-[#d4e8fb] border-y-2 border-[#6aa9ea]">200~250</div>
      <div className="w-[102px] relative flex items-center justify-center italic text-[#9a9a9a] border-2 border-[#6aa9ea]">
        侧面筋信息
        <span className="absolute -right-[3px] -bottom-[3px] w-[4px] h-[4px] bg-[#5aa5f5]" />
      </div>
    </div>
    <div className="flex-1 flex">
      <div className="w-[15px] bg-[#f0f0f0]" />
    </div>
  </div>
);

const floors = [['全楼', 0, 'mixed'], ['工程1', 1, 'mixed'], ['第6层', 2], ['第5层', 2], ['第4层', 2], ['第3层', 2], ['第2层', 2], ['首层（当前楼层）', 2, 'on'], ['基础层', 2]];

const FloorCheck = ({ state }) => {
  if (state === 'on') {
    return (
      <span className="w-[14px] h-[14px] rounded-[2px] bg-[#5aa5f5] flex items-center justify-center shrink-0">
        <Svg w={10} h={10}><path d="M1.500 5l2.500 2.500L8.500 2.500" stroke="#fff" strokeWidth="2" /></Svg>
      </span>
    );
  }
  if (state === 'mixed') {
    return (
      <span className="w-[14px] h-[14px] rounded-[2px] border border-[#999] bg-white flex items-center justify-center shrink-0">
        <span className="w-[10px] h-[10px] rounded-[2px] bg-[#a4c9fa] border border-[#5aa5f5]" />
      </span>
    );
  }
  return <Box />;
};

const FloorTree = () => (
  <div className="relative w-[219px] h-[444px] mt-[20px] shrink-0 rounded-[3px] border border-[#c8ccd2] bg-white pt-[14px] text-[#222]">
    <span className="absolute left-[10px] -top-[9px] px-[1px] bg-[#f0f0f0] leading-4">楼层选择</span>
    {floors.map(([label, level, state]) => (
      <div key={label} className={`h-[24px] flex items-center ${level === 0 ? 'pl-[15px]' : level === 1 ? 'pl-[35px]' : 'pl-[72px]'}`}>
        {level < 2 && <span className="w-[17px]"><Tri /></span>}
        <FloorCheck state={state} />
        <span className="ml-[10px] whitespace-nowrap">{label}</span>
      </div>
    ))}
  </div>
);

const Dialog = () => (
  <div className="absolute left-[546px] top-[241px] w-[1038px] h-[543px] flex flex-col bg-[#f0f0f0] border-x border-b border-[#c8c8c8] text-[#222]">
    <div className="h-[27px] shrink-0 flex items-center bg-[#2e7fe0] text-white pl-[8px] pr-[10px]">
      <span>生成侧面筋</span>
      <span className="ml-auto w-[8px] h-[7px] border border-white border-t-2" />
      <span className="ml-[16px] text-[15px] leading-none">✕</span>
    </div>
    <div className="flex pl-[11px] pr-[11px] gap-[6px]">
      <div className="w-[789px] shrink-0 flex flex-col">
        <div className="mt-[17px] h-[26px] flex items-center">
          <span className="ml-[6px]">侧面钢筋设置：</span>
          <span className="ml-[17px]"><Radio on /></span>
          <span className="ml-[7px]">梁腹板高</span>
          <span className="ml-[17px]"><Radio /></span>
          <span className="ml-[7px]">梁高</span>
          <span className="ml-[17px] w-px h-[20px] bg-[#cfcfcf]" />
          <Btn className="ml-[18px] w-[90px]">梁腹板高设置</Btn>
        </div>
        <div className="mt-[12px] flex gap-[7px]">
          <GridTable />
          <Section />
        </div>
        <div className="mt-[7px] flex items-center w-[550px]">
          <Btn className="w-[64px]">查看说明</Btn>
          <div className="ml-[67px] flex gap-[6px]">
            <Btn className="w-[65px]">导入</Btn>
            <Btn className="w-[65px]">导出</Btn>
            <Btn className="w-[65px]">添加行</Btn>
            <Btn className="w-[65px]">添加列</Btn>
            <Btn className="w-[65px]">删除行</Btn>
            <Btn className="w-[65px]" off>删除列</Btn>
          </div>
        </div>
        <div className="mt-[7px] h-[16px] flex items-center">
          <span>生成方式</span>
          <span className="ml-[5px] flex-1 h-px bg-[#c8ccd2]" />
        </div>
        <div className="mt-[7px] h-[16px] flex items-center pl-[1px]">
          <Radio />
          <span className="ml-[8px] w-[110px]">选择图元</span>
          <Radio on />
          <span className="ml-[8px]">选择楼层</span>
        </div>
        <div className="mt-[7px] h-[16px] flex items-center pl-[1px]">
          <Box />
          <span className="ml-[7px]">覆盖梁跨中手动编辑的侧面原位标注筋</span>
        </div>
      </div>
      <FloorTree />
    </div>
    <div className="mx-[11px] mt-[7px] h-px bg-[#c8ccd2]" />
    <div className="mt-[6px] pr-[11px] flex justify-end gap-[7px]">
      <div className="w-[77px] h-[26px] flex items-center justify-center rounded-[3px] bg-[#2e7fe0] text-white">确定</div>
      <Btn className="w-[77px]">取消</Btn>
    </div>
    <div className="mt-auto mb-[2px] mr-[2px] self-end">
      <Svg w={8} h={8}><path d="M6 0h2v2H6zM3 3h2v2H3zM6 3h2v2H6zM0 6h2v2H0zM3 6h2v2H3zM6 6h2v2H6z" fill="#888" /></Svg>
    </div>
  </div>
);

// red annotation arrows, tip first then tail
const arrowPoints = ([tx, ty], [ex, ey]) => {
  const len = Math.hypot(ex - tx, ey - ty);
  const ux = (ex - tx) / len;
  const uy = (ey - ty) / len;
  const px = -uy;
  const py = ux;
  const at = (d, s) => `${(tx + ux * d + px * s).toFixed(1)},${(ty + uy * d + py * s).toFixed(1)}`;
  return [at(0, 0), at(25, 11), at(21, 4.5), `${ex},${ey}`, at(21, -4.5), at(25, -11)].join(' ');
};

const arrows = [
  [[1546, 65], [1642, 239]],
  [[661, 398], [596, 513]],
  [[872, 664], [900, 732]],
  [[693, 709], [632, 815]],
  [[1493, 506], [1561, 637]],
];

export default function App() {
  return (
    <div className="relative w-[1868px] h-[968px] overflow-hidden bg-white text-xs font-['Noto_Sans_CJK_SC','Noto_Sans',sans-serif]">
      <Header />
      <Ribbon />
      <div className="h-[28px] flex gap-[5px] pl-[3px] pt-[4px] bg-[#c9ccd0] border-b border-[#8f9296]">
        <Combo label="首层" />
        <Combo label="梁" />
        <Combo label="梁" />
        <Combo label="KL-1" />
        <Combo label="分层1" />
      </div>
      <div className="flex h-[801px]">
        <LeftPanel />
        <div className="w-[5px] shrink-0 bg-[#f0f0f0]" />
        <div className="w-[348px] shrink-0 flex flex-col bg-[#f0f0f0]">
          <CompPanel />
          <PropPanel />
        </div>
        <div className="w-[5px] shrink-0 flex flex-col bg-[#e8e8e8]">
          <div className="h-[373px]" />
          <div className="h-[100px] bg-[#4a5058]" />
        </div>
        <Canvas />
      </div>
      <Dialog />
      <svg width="1868" height="968" className="absolute inset-0 pointer-events-none">
        {arrows.map(([tip, tail], i) => <polygon key={i} points={arrowPoints(tip, tail)} fill="#fb3b3b" />)}
      </svg>
    </div>
  );
}
